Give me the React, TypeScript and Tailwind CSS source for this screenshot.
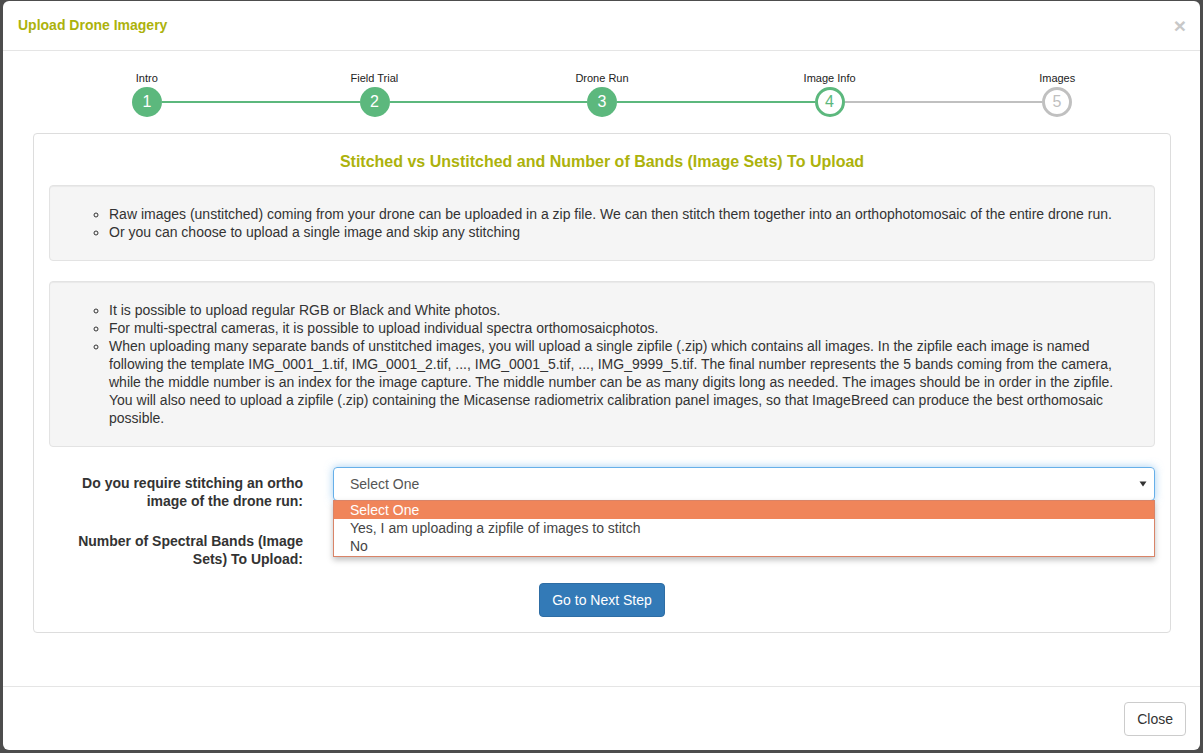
const steps = [
  { n: 1, label: 'Intro', state: 'done' },
  { n: 2, label: 'Field Trial', state: 'done' },
  { n: 3, label: 'Drone Run', state: 'done' },
  { n: 4, label: 'Image Info', state: 'active' },
  { n: 5, label: 'Images', state: 'todo' }
];

function Circle({ n, state }: { n: number; state: string }) {
  if (state === 'done') {
    return <div className="flex h-[30px] w-[30px] shrink-0 items-center justify-center rounded-full bg-[#5cb87d] text-[16px] text-white">{n}</div>;
  }
  if (state === 'active') {
    return <div className="flex h-[30px] w-[30px] shrink-0 items-center justify-center rounded-full border-[3px] border-[#5cb87d] bg-white text-[16px] text-[#5cb87d]">{n}</div>;
  }
  return <div className="flex h-[30px] w-[30px] shrink-0 items-center justify-center rounded-full border-[3px] border-[#c0c0c0] bg-white text-[16px] text-[#c0c0c0]">{n}</div>;
}

function Stepper() {
  return (
    <div className="ml-[30px] mr-[29px] pt-[21px]">
      <div className="grid grid-cols-5 text-center text-[11px] leading-[13px] text-[#222]">
        {steps.map((s) => <div key={s.n}>{s.label}</div>)}
      </div>
      <div className="mt-[2px] flex items-center px-[99px]">
        <Circle n={1} state="done" />
        <div className="h-[2px] flex-1 bg-[#5cb87d]" />
        <Circle n={2} state="done" />
        <div className="h-[2px] flex-1 bg-[#5cb87d]" />
        <Circle n={3} state="done" />
        <div className="h-[2px] flex-1 bg-[#5cb87d]" />
        <Circle n={4} state="active" />
        <div className="h-[2px] flex-1 bg-[#c0c0c0]" />
        <Circle n={5} state="todo" />
      </div>
    </div>
  );
}

export default function App() {
  return (
    <div className="h-[753px] w-[1203px] overflow-hidden bg-[#4d4d4d] pl-[3px] pt-[1px] text-[14px] text-[#333]" style={{ fontFamily: '"Liberation Sans", Arial, sans-serif' }}>
      <div className="flex h-[749px] w-[1197px] flex-col rounded-[6px] bg-white">
        <div className="flex h-[50px] items-center justify-between border-b border-[#e5e5e5] px-[15px]">
          <h4 className="text-[14px] font-bold text-[#acb20c]">Upload Drone Imagery</h4>
          <span className="-mr-[1px] text-[21px] font-bold leading-none text-[#c8c8c8]">×</span>
        </div>

        <div className="flex-1">
          <Stepper />

          <div className="ml-[30px] mr-[29px] mt-[16px] rounded-[4px] border border-[#dddddd] px-[15px] pb-[15px] pt-[18px]">
            <h4 className="text-center text-[16px] font-bold leading-[20px] text-[#acb20c]">Stitched vs Unstitched and Number of Bands (Image Sets) To Upload</h4>

            <div className="mt-[13px] rounded-[4px] border border-[#e3e3e3] bg-[#f5f5f5] p-[19px] leading-[18px] shadow-[inset_0_1px_1px_rgba(0,0,0,0.05)]">
              <ul className="list-[circle] pl-[40px]">
                <li>Raw images (unstitched) coming from your drone can be uploaded in a zip file. We can then stitch them together into an orthophotomosaic of the entire drone run.</li>
                <li>Or you can choose to upload a single image and skip any stitching</li>
              </ul>
            </div>

            <div className="mt-[20px] rounded-[4px] border border-[#e3e3e3] bg-[#f5f5f5] p-[19px] leading-[18px] shadow-[inset_0_1px_1px_rgba(0,0,0,0.05)]">
              <ul className="list-[circle] pl-[40px]">
                <li>It is possible to upload regular RGB or Black and White photos.</li>
                <li>For multi-spectral cameras, it is possible to upload individual spectra orthomosaicphotos.</li>
                <li>When uploading many separate bands of unstitched images, you will upload a single zipfile (.zip) which contains all images. In the zipfile each image is named following the template IMG_0001_1.tif, IMG_0001_2.tif, ..., IMG_0001_5.tif, ..., IMG_9999_5.tif. The final number represents the 5 bands coming from the camera, while the middle number is an index for the image capture. The middle number can be as many digits long as needed. The images should be in order in the zipfile. You will also need to upload a zipfile (.zip) containing the Micasense radiometrix calibration panel images, so that ImageBreed can produce the best orthomosaic possible.</li>
              </ul>
            </div>

            <div className="mt-[20px] grid grid-cols-[254px_1fr] gap-x-[30px] gap-y-[15px]">
              <label className="pt-[7px] text-right font-bold leading-[18px]">Do you require stitching an ortho image of the drone run:</label>
              <div className="relative">
                <div className="flex h-[34px] items-center justify-between rounded-[4px] border border-[#66afe9] px-[16px] text-[#555] shadow-[0_0_8px_rgba(102,175,233,0.6)]">
                  <span>Select One</span>
                  <svg width="8" height="6" viewBox="0 0 8 6" className="-mr-[9px]"><path d="M0.5 0.5 L7.5 0.5 L4 5.5 Z" fill="#333" /></svg>
                </div>
                <div className="absolute left-0 right-0 top-[33px] z-10 border border-[#d98468] bg-white pb-[1px] leading-[18px] text-[#333] shadow-[0_3px_6px_rgba(0,0,0,0.25)]">
                  <div className="bg-[#f0855a] px-[16px] text-white">Select One</div>
                  <div className="px-[16px] text-[#444]">Yes, I am uploading a zipfile of images to stitch</div>
                  <div className="px-[16px] text-[#444]">No</div>
                </div>
              </div>
              <label className="pt-[7px] text-right font-bold leading-[18px]">Number of Spectral Bands (Image Sets) To Upload:</label>
              <div className="h-[34px]" />
            </div>

            <div className="mt-[15px] flex justify-center">
              <button className="h-[34px] rounded-[4px] border border-[#2e6da4] bg-[#337ab7] px-[12px] text-white">Go to Next Step</button>
            </div>
          </div>
        </div>

        <div className="flex justify-end border-t border-[#e5e5e5] px-[14px] pb-[14px] pt-[15px]">
          <button className="h-[34px] rounded-[4px] border border-[#cccccc] bg-white px-[12px] text-[#333]">Close</button>
        </div>
      </div>
    </div>
  );
}
